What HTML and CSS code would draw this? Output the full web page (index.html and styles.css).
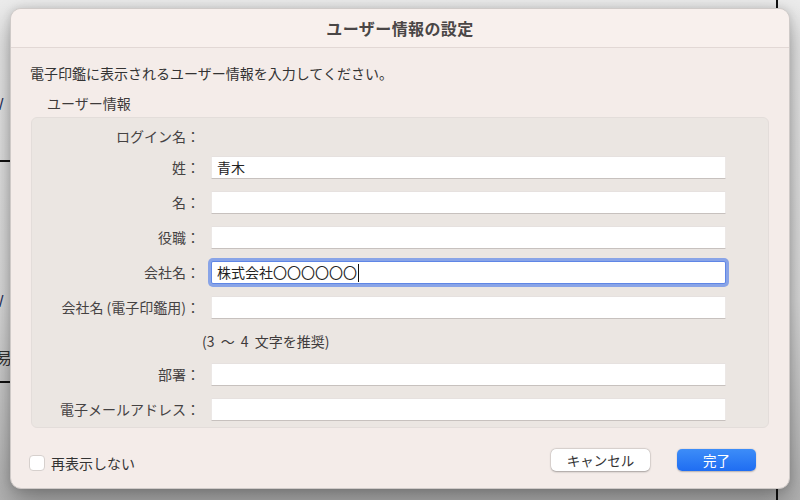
FILE: index.html
```html
<!DOCTYPE html>
<html lang="ja">
<head>
<meta charset="utf-8">
<title>ユーザー情報の設定</title>
<link rel="stylesheet" href="styles.css">
</head>
<body>
<div class="backdrop">
  <div class="bg-vline"></div>
  <div class="bg-slash bg-slash-1">/</div>
  <div class="bg-hline bg-hline-1"></div>
  <div class="bg-slash bg-slash-2">/</div>
  <div class="bg-kanji">易</div>
  <div class="bg-hline bg-hline-2"></div>
</div>
<div class="dialog">
  <div class="titlebar">ユーザー情報の設定</div>
  <div class="content">
    <p class="desc">電子印鑑に表示されるユーザー情報を入力してください。</p>
    <div class="group-label">ユーザー情報</div>
    <div class="group">
      <div class="label login">ログイン名：</div>
      <div class="login-value"></div>

      <div class="label">姓：</div>
      <div class="field">青木</div>

      <div class="label">名：</div>
      <div class="field"></div>

      <div class="label">役職：</div>
      <div class="field"></div>

      <div class="label">会社名：</div>
      <div class="field focused">株式会社〇〇〇〇〇〇<span class="caret"></span></div>

      <div class="label">会社名 (電子印鑑用)：</div>
      <div class="field"></div>

      <div class="hint">(3 〜 4 文字を推奨)</div>

      <div class="label">部署：</div>
      <div class="field"></div>

      <div class="label">電子メールアドレス：</div>
      <div class="field"></div>
    </div>
    <div class="footer">
      <label class="check"><span class="box"></span>再表示しない</label>
      <div class="buttons">
        <div class="btn cancel">キャンセル</div>
        <div class="btn primary">完了</div>
      </div>
    </div>
  </div>
</div>
</body>
</html>
```
FILE: styles.css
```css
html, body {
  margin: 0;
  padding: 0;
  width: 800px;
  height: 500px;
  overflow: hidden;
}
body {
  position: relative;
  background: linear-gradient(#ececec 0%, #dedede 60%, #b4b4b4 100%);
  font-family: "Noto Sans CJK JP", "Noto Sans", sans-serif;
  color: #3a3838;
  padding-top: 8px;
  box-sizing: border-box;
}
.backdrop {
  position: absolute;
  left: 0;
  top: 0;
  width: 800px;
  height: 500px;
}
.bg-vline {
  position: absolute;
  left: 776px;
  top: 0;
  width: 2px;
  height: 500px;
  background: #111;
}
.bg-slash {
  position: absolute;
  left: -1px;
  font-family: "Liberation Sans", sans-serif;
  font-size: 16px;
  color: #1e2e5a;
  line-height: 20px;
}
.bg-slash-1 { top: 95px; }
.bg-slash-2 { top: 292px; }
.bg-kanji {
  position: absolute;
  left: -4px;
  top: 347px;
  font-size: 16px;
  line-height: 20px;
  color: #333;
}
.bg-hline {
  position: absolute;
  left: 0;
  width: 12px;
  height: 2px;
  background: #111;
}
.bg-hline-1 { top: 160px; }
.bg-hline-2 { top: 381px; }

.dialog {
  position: relative;
  margin-left: 10px;
  width: 780px;
  height: 481px;
  box-sizing: border-box;
  background: #f4ece9;
  border: 1px solid #cfcac8;
  border-radius: 11px;
  box-shadow: 0 12px 28px rgba(0,0,0,0.35), 0 0 8px rgba(0,0,0,0.12);
  overflow: hidden;
  display: flex;
  flex-direction: column;
}
.titlebar {
  height: 38px;
  line-height: 38px;
  text-align: center;
  font-size: 16px;
  font-weight: bold;
  letter-spacing: 0.4px;
  color: #4a4646;
  background: #f8f0ed;
  border-bottom: 1px solid #e2d8d5;
}
.content {
  flex: 1;
  padding: 15px 20px 19px 20px;
  display: flex;
  flex-direction: column;
}
.desc {
  margin: 0 0 0 -1px;
  font-size: 14px;
  line-height: 20px;
  color: #333;
}
.group-label {
  margin-top: 10px;
  margin-left: 16px;
  font-size: 14px;
  line-height: 20px;
  color: #3e3b3b;
}
.group {
  margin-top: 4px;
  height: 311px;
  box-sizing: border-box;
  background: #ebe6e2;
  border: 1px solid #e3ddda;
  border-radius: 6px;
  padding: 8px 42px 6px 0;
  display: grid;
  grid-template-columns: 168px 1fr;
  column-gap: 11px;
  row-gap: 12px;
  align-content: start;
}
.label {
  text-align: right;
  font-size: 14px;
  line-height: 23px;
  color: #454242;
  white-space: nowrap;
}
.label.login {
  line-height: 20px;
  margin-bottom: -2px;
}
.login-value {
  height: 20px;
  margin-bottom: -2px;
}
.field {
  height: 23px;
  box-sizing: border-box;
  background: #ffffff;
  border-top: 1px solid #e6e1df;
  border-bottom: 1px solid #c7c1be;
  border-left: 1px solid #ece8e6;
  border-right: 1px solid #ece8e6;
  padding-left: 5px;
  font-size: 14px;
  line-height: 21px;
  color: #222;
  display: flex;
  align-items: center;
}
.field.focused {
  border: 1px solid #5f86e6;
  border-radius: 2px;
  box-shadow: 0 0 0 3px rgba(120, 152, 232, 0.85);
}
.caret {
  display: inline-block;
  width: 1px;
  height: 18px;
  background: #111;
  margin-left: 1px;
}
.hint {
  grid-column: 2;
  margin-left: -9px;
  font-size: 14px;
  line-height: 20px;
  word-spacing: 3px;
  color: #3e3b3b;
}
.footer {
  margin-top: 19px;
  display: flex;
  align-items: center;
  justify-content: space-between;
  padding-right: 13px;
}
.check {
  display: flex;
  align-items: center;
  margin-left: -2px;
  margin-top: 6px;
  font-size: 14px;
  color: #333;
}
.box {
  width: 16px;
  height: 16px;
  box-sizing: border-box;
  background: #fff;
  border: 1px solid #d6d0cd;
  border-radius: 4px;
  margin-right: 6px;
}
.buttons {
  display: flex;
  gap: 27px;
}
.btn {
  height: 22px;
  line-height: 22px;
  text-align: center;
  font-size: 13.5px;
  border-radius: 5px;
}
.btn.cancel {
  width: 99px;
  background: #fff;
  color: #333;
  box-shadow: 0 0.5px 2px rgba(0,0,0,0.3), 0 0 0 0.5px rgba(0,0,0,0.08);
}
.btn.primary {
  width: 79px;
  background: linear-gradient(#3d8df8, #1f6df2);
  color: #fff;
  box-shadow: 0 0.5px 1.5px rgba(0,0,0,0.25);
}
```
